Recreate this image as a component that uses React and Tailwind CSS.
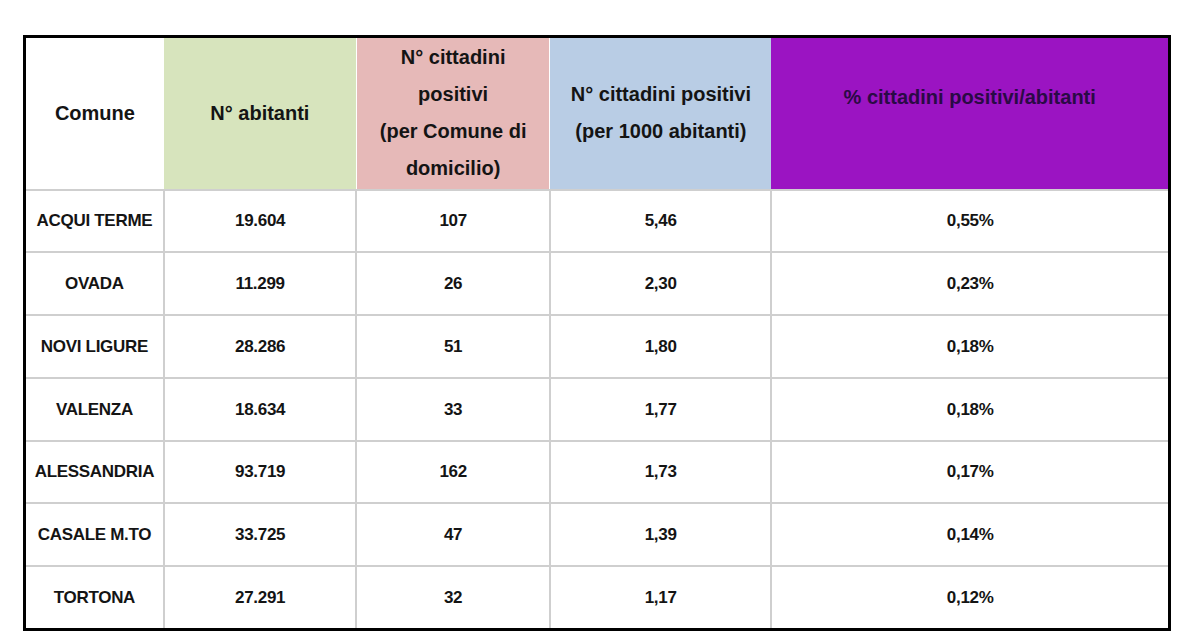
const rows = [
  ["ACQUI TERME", "19.604", "107", "5,46", "0,55%"],
  ["OVADA", "11.299", "26", "2,30", "0,23%"],
  ["NOVI LIGURE", "28.286", "51", "1,80", "0,18%"],
  ["VALENZA", "18.634", "33", "1,77", "0,18%"],
  ["ALESSANDRIA", "93.719", "162", "1,73", "0,17%"],
  ["CASALE M.TO", "33.725", "47", "1,39", "0,14%"],
  ["TORTONA", "27.291", "32", "1,17", "0,12%"],
];

export default function App() {
  return (
    <div className="w-[1200px] h-[640px] bg-white pt-[35px] pl-[23px] font-['Liberation_Sans',Arial,sans-serif] text-[#141414]">
      <table className="border-collapse border-[3px] border-black table-fixed w-[1148px]">
        <colgroup>
          <col className="w-[139px]" />
          <col className="w-[192px]" />
          <col className="w-[193px]" />
          <col className="w-[221px]" />
          <col className="w-[397px]" />
        </colgroup>
        <thead>
          <tr className="h-[153px] text-[20px] font-bold leading-[37px] text-center">
            <th className="bg-white">Comune</th>
            <th className="bg-[#d7e4bd]">N° abitanti</th>
            <th className="bg-[#e6b9b8] border-x border-white">
              N° cittadini<br />positivi<br />(per Comune di<br />domicilio)
            </th>
            <th className="bg-[#b9cde5]">
              N° cittadini positivi<br />(per 1000 abitanti)
            </th>
            <th className="bg-[#9b14c2] align-top pt-[41px] text-[#2a0a45]">
              % cittadini positivi/abitanti
            </th>
          </tr>
        </thead>
        <tbody>
          {rows.map((r) => (
            <tr key={r[0]} className="h-[62.8px] text-[17px] font-bold text-center">
              {r.map((c, i) => (
                <td key={i} className="border-2 border-[#cfcfcf] first:border-l-0 last:border-r-0 tracking-[-0.3px]">
                  {c}
                </td>
              ))}
            </tr>
          ))}
        </tbody>
      </table>
    </div>
  );
}
